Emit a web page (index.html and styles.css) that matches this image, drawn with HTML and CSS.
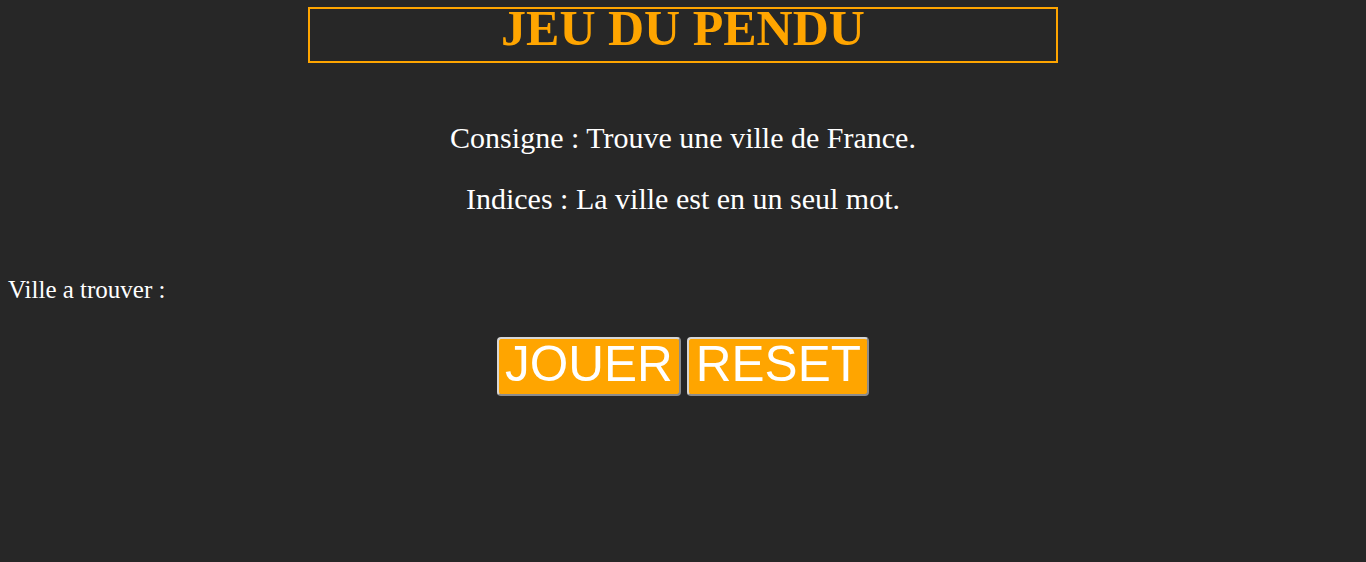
FILE: index.html
```html
<!DOCTYPE html>
<html lang="fr">
<head>
<meta charset="utf-8">
<title>Jeu du pendu</title>
<link rel="stylesheet" href="styles.css">
</head>
<body>
<header class="title-box">
  <h1 class="title">JEU DU PENDU</h1>
</header>
<section class="rules">
  <p class="rule">Consigne : Trouve une ville de France.</p>
  <p class="rule">Indices : La ville est en un seul mot.</p>
</section>
<p class="word">Ville a trouver :</p>
<div class="actions">
  <button class="btn">JOUER</button>
  <button class="btn">RESET</button>
</div>
</body>
</html>
```

FILE: styles.css
```css
html, body {
  background: #272727;
}
body {
  margin: 0;
  padding: 7px 8px 0;
  color: #ffffff;
  font-family: "Liberation Serif", "Times New Roman", serif;
  font-size: 25px;
}
.title-box {
  width: 746px;
  height: 52px;
  margin: 0 auto;
  border: 2px solid #ffa500;
  text-align: center;
}
.title {
  margin: 0;
  font-size: 50px;
  line-height: 38px;
  font-weight: bold;
  color: #ffa500;
}
.rules {
  margin-top: 58px;
  display: flex;
  flex-direction: column;
  gap: 26px;
  text-align: center;
}
.rule {
  margin: 0;
  font-size: 30px;
  line-height: 34.5px;
}
.word {
  margin: 60px 0 0;
  line-height: 28px;
}
.actions {
  margin-top: 33px;
  text-align: center;
  font-size: 24px;
}
.btn {
  font-family: "Liberation Sans", Arial, sans-serif;
  font-size: 49.5px;
  line-height: 50px;
  padding: 0 6.5px 5px;
  color: #ffffff;
  background-color: #ffa500;
  border: 2px solid;
  border-color: #d6d6d6 #8c8c8c #8c8c8c #d6d6d6;
  border-radius: 4px;
  vertical-align: top;
}
```
